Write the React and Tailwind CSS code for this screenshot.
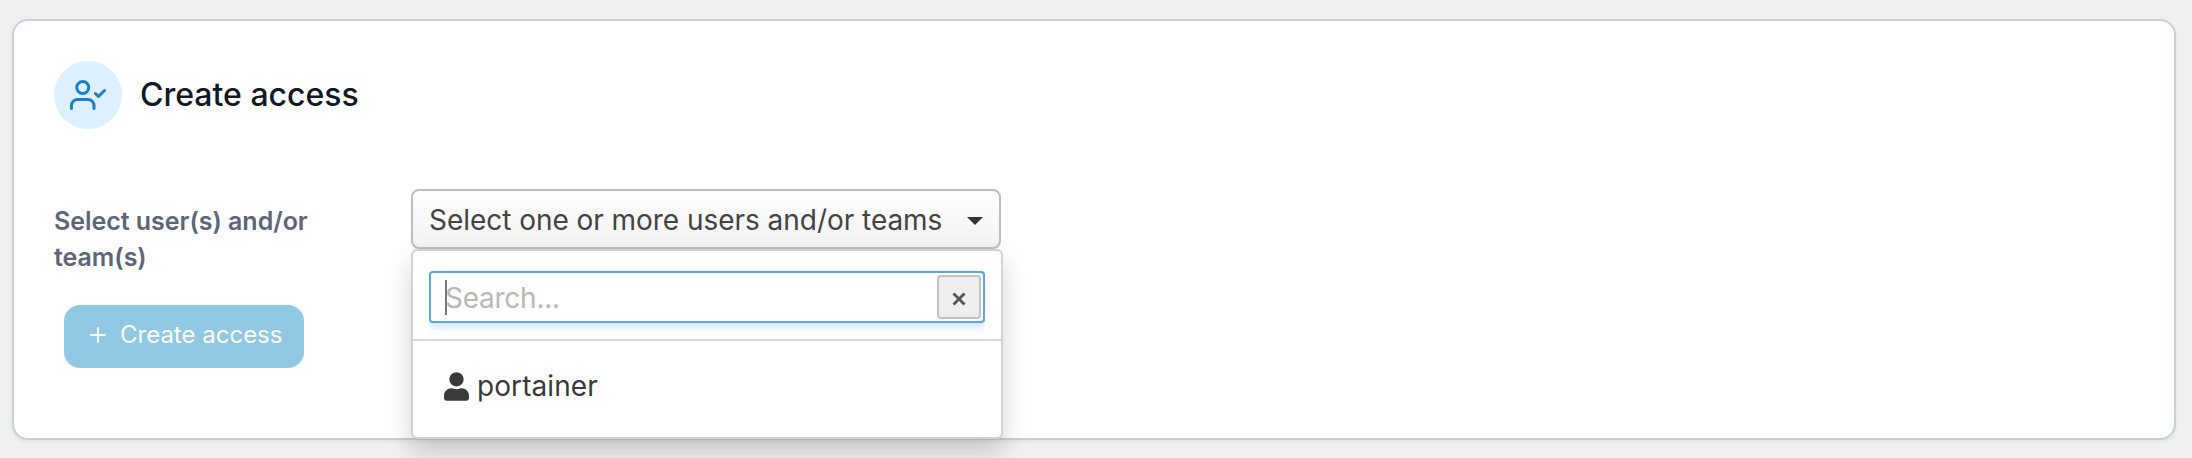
import React from "react";

function UserCheckIcon() {
  return (
    <svg viewBox="0 0 24 24" className="size-9" fill="none" stroke="#1a7fc6" strokeWidth="2" strokeLinecap="round" strokeLinejoin="round">
      <path d="M16 21v-2a4 4 0 0 0-4-4H5a4 4 0 0 0-4 4v2" />
      <circle cx="8.5" cy="7" r="4" />
      <polyline points="17 11 19 13 23 9" />
    </svg>
  );
}

function UserIcon() {
  return (
    <svg viewBox="0 0 448 512" className="h-[29px] w-[25px]" fill="#3a3a3a">
      <path d="M224 256c70.7 0 128-57.3 128-128S294.700 0 224 0 96 57.300 96 128s57.300 128 128 128zm89.600 32h-16.700c-22.200 10.200-46.900 16-72.900 16s-50.600-5.800-72.900-16h-16.700C60.200 288 0 348.200 0 422.400V464c0 26.500 21.500 48 48 48h352c26.500 0 48-21.500 48-48v-41.600c0-74.200-60.200-134.400-134.400-134.400z" />
    </svg>
  );
}

function UserSelect() {
  return (
    <div className="relative w-[590px] text-[28px] tracking-[-0.04px] text-[#444]">
      <button className="flex h-[60px] w-full items-center rounded-lg border-2 border-[#bdbdbd] bg-linear-to-b from-white to-[#f2f2f2] px-4">
        <span className="flex-1 whitespace-nowrap pt-px text-left leading-9">Select one or more users and/or teams</span>
        <svg viewBox="0 0 16 8" className="mt-1 h-2 w-4" fill="#333">
          <path d="M0 0h16L8 8z" />
        </svg>
      </button>
      <div className="absolute left-0 top-[60px] h-[190px] w-[592px] rounded-md border-2 border-[#d2d2d2] bg-white shadow-[0_12px_24px_rgba(0,0,0,0.175)]">
        <div className="h-[90px] border-b-2 border-[#d8d8d8] px-4 pt-5">
          <div className="flex h-[52px] items-center rounded-[4px] border-2 border-[#5ca5e3] bg-white pl-3.5 pr-0.5 shadow-[0_3px_10px_rgba(102,175,233,0.4)] [clip-path:inset(-12px_0)]">
            <span className="h-[35px] w-0.5 bg-[#777]" />
            <span className="-ml-0.5 flex-1 pt-px leading-9 tracking-[-0.25px] text-[#b8b8b8]">Search...</span>
            <button className="flex size-11 items-center justify-center rounded-[4px] border-2 border-[#c2c2c2] bg-[#eee]">
              <svg viewBox="0 0 14 14" className="mt-1 size-3.5" stroke="#555" strokeWidth="2.800">
                <path d="M1.500 1.500l11 11M12.500 1.500l-11 11" />
              </svg>
            </button>
          </div>
        </div>
        <div className="flex items-center gap-2 pl-[31px] pt-[27px] text-[#3a3a3a]">
          <UserIcon />
          <span className="leading-9 tracking-[0.08px]">portainer</span>
        </div>
      </div>
    </div>
  );
}

export default function App() {
  return (
    <main className="h-[458px] overflow-hidden bg-[#f0f0f0] pl-3 pr-4 pt-[19px] font-['Inter',sans-serif]">
      <section className="h-[421px] rounded-2xl border-2 border-[#c9ced9] bg-white px-10 pt-10 shadow-[0_2px_4px_rgba(16,24,40,0.06)]">
        <header className="flex items-center gap-[18px]">
          <span className="flex size-[68px] items-center justify-center rounded-full bg-[#dcf0ff]">
            <UserCheckIcon />
          </span>
          <h1 className="text-[32px] font-medium leading-10 text-[#101828]">Create access</h1>
        </header>
        <div className="mt-[60px] flex">
          <label className="w-[357px] pt-3.5 text-[25px] font-semibold leading-9 tracking-[-0.03px] text-[#5d6579]">
            Select user(s) and/or<br />team(s)
          </label>
          <UserSelect />
        </div>
        <button className="ml-2.5 mt-[30px] flex h-[63px] w-[240px] items-center rounded-2xl bg-[#91c8e4] pb-[3px] pl-6 text-white">
          <svg viewBox="0 0 20 20" className="size-5" fill="none" stroke="currentColor" strokeWidth="1.8" strokeLinecap="round">
            <path d="M10 3v14M3 10h14" />
          </svg>
          <span className="ml-3 whitespace-nowrap text-2xl">Create access</span>
        </button>
      </section>
    </main>
  );
}
